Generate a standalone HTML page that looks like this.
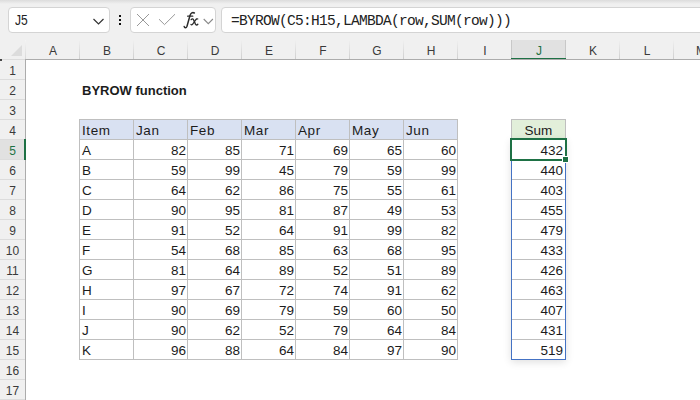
<!DOCTYPE html><html><head><meta charset="utf-8"><style>
*{margin:0;padding:0;box-sizing:border-box}
html,body{width:700px;height:400px;overflow:hidden;background:#fff}
body{position:relative;font-family:"Liberation Sans",sans-serif;color:#000}
.a{position:absolute}
#tb{left:0;top:0;width:700px;height:40px;background:#f0f0f0}
#tbtop{left:0;top:0;width:700px;height:4px;background:linear-gradient(#dcdcdc,#f0f0f0)}
.box{position:absolute;top:7px;height:26px;background:#fff;border:1px solid #d4d4d4;border-radius:4px}
#hdr{left:0;top:40px;width:700px;height:20px;background:#f0f0f0}
#rhdr{left:0;top:60px;width:26px;height:340px;background:#f0f0f0}
.ch{position:absolute;top:40px;height:19px;width:54px;text-align:center;font-size:12px;line-height:23px;color:#3a3a3a}
.chl{position:absolute;top:40px;width:1px;height:19px;background:linear-gradient(#f0f0f0,#cfcfcf)}
.rh{position:absolute;left:0;width:25px;height:20px;text-align:center;font-size:12px;line-height:23px;color:#3a3a3a}
.rhl{position:absolute;left:0;width:25px;height:1px;background:#dcdcdc}
.c{position:absolute;height:20px;font-size:13.5px;line-height:22px;white-space:nowrap;color:#1c1c1c}
.t{letter-spacing:0.6px}
.n{text-align:right}
</style></head><body><div class="a" id="tb"></div><div class="a" id="tbtop"></div>
<div class="box" style="left:8px;width:102px"></div>
<div class="a" style="left:15px;top:7px;height:26px;line-height:26px;font-size:14px;color:#222;transform:scaleX(0.86);transform-origin:0 0">J5</div>
<svg class="a" style="left:92px;top:17px" width="13" height="9" viewBox="0 0 13 9"><path d="M1.5 2 L6.5 7 L11.5 2" fill="none" stroke="#333" stroke-width="1.2"/></svg>
<div class="a" style="left:119px;top:15px;width:2px;height:2px;background:#111"></div>
<div class="a" style="left:119px;top:19px;width:2px;height:2px;background:#111"></div>
<div class="a" style="left:119px;top:23px;width:2px;height:2px;background:#111"></div>
<div class="box" style="left:130px;width:86px"></div>
<svg class="a" style="left:136px;top:13px" width="14" height="14" viewBox="0 0 14 14"><path d="M1 1 L13 13 M13 1 L1 13" fill="none" stroke="#999" stroke-width="1"/></svg>
<svg class="a" style="left:158px;top:13px" width="18" height="14" viewBox="0 0 18 14"><path d="M1 6.2 L6.5 11.6 L17 1.2" fill="none" stroke="#999" stroke-width="1"/></svg>
<svg class="a" style="left:180px;top:8px" width="24" height="24" viewBox="0 0 24 24"><g fill="none" stroke="#2b2b2b" stroke-linecap="round"><path d="M4.2,18.6 C4.6,20.2 6.2,20.3 7,18.2 L10,7.5 C10.8,4.8 12.6,4.1 14.4,5" stroke-width="1.5"/><path d="M7.6,8.2 L12.8,8.2" stroke-width="1.2"/><path d="M11.2,11.6 C12,10.6 13.2,10.6 13.7,12 L15.4,16 C16,17.3 17,17.2 17.8,16.2" stroke-width="1.4"/><path d="M17.8,11 C17,10.4 16.4,10.9 15.5,12.2 L12.9,15.9 C12.1,17.1 11.4,17.1 10.9,16.4" stroke-width="1.2"/></g></svg>
<svg class="a" style="left:202px;top:17px" width="12" height="8" viewBox="0 0 12 8"><path d="M1.7 2 L6.3 6.6 L10.9 2" fill="none" stroke="#8a8a8a" stroke-width="1.1"/></svg>
<div class="box" style="left:221px;width:520px"></div>
<div class="a" style="left:231px;top:8px;height:26px;line-height:26px;font-family:'Liberation Mono',monospace;font-size:14.5px;letter-spacing:-0.7px;color:#222">=BYROW(C5:H15,LAMBDA(row,SUM(row)))</div>
<div class="a" id="hdr"></div><div class="a" id="rhdr"></div>
<svg class="a" style="left:10px;top:44px" width="13" height="13" viewBox="0 0 13 13"><path d="M12 1 L12 12 L1 12 Z" fill="#dcdcdc"/></svg>
<div class="a" style="left:511px;top:40px;width:55px;height:19px;background:#e1e1e1;border-left:1px solid #c8c8c8;border-right:1px solid #c8c8c8"></div>
<div class="ch" style="left:26px;color:#3a3a3a">A</div>
<div class="chl" style="left:79px"></div>
<div class="ch" style="left:80px;color:#3a3a3a">B</div>
<div class="chl" style="left:133px"></div>
<div class="ch" style="left:134px;color:#3a3a3a">C</div>
<div class="chl" style="left:187px"></div>
<div class="ch" style="left:188px;color:#3a3a3a">D</div>
<div class="chl" style="left:241px"></div>
<div class="ch" style="left:242px;color:#3a3a3a">E</div>
<div class="chl" style="left:295px"></div>
<div class="ch" style="left:296px;color:#3a3a3a">F</div>
<div class="chl" style="left:349px"></div>
<div class="ch" style="left:350px;color:#3a3a3a">G</div>
<div class="chl" style="left:403px"></div>
<div class="ch" style="left:404px;color:#3a3a3a">H</div>
<div class="chl" style="left:457px"></div>
<div class="ch" style="left:458px;color:#3a3a3a">I</div>
<div class="ch" style="left:512px;color:#1e7145">J</div>
<div class="ch" style="left:566px;color:#3a3a3a">K</div>
<div class="chl" style="left:619px"></div>
<div class="ch" style="left:620px;color:#3a3a3a">L</div>
<div class="chl" style="left:673px"></div>
<div class="ch" style="left:674px;color:#3a3a3a">M</div>
<div class="chl" style="left:727px"></div>
<div class="a" style="left:511px;top:58px;width:55px;height:2px;background:#1e7145"></div>
<div class="a" style="left:0;top:59px;width:25px;height:1px;background:#dcdcdc"></div><div class="a" style="left:25px;top:59px;width:675px;height:1px;background:#acacac"></div><div class="a" style="left:0;top:58.5px;width:2px;height:2px;background:#111;border-radius:1px"></div>
<div class="a" style="left:0;top:139px;width:25px;height:21px;background:#e1e1e1"></div>
<div class="rh" style="top:60px;color:#3a3a3a">1</div>
<div class="rhl" style="top:79px"></div>
<div class="rh" style="top:80px;color:#3a3a3a">2</div>
<div class="rhl" style="top:99px"></div>
<div class="rh" style="top:100px;color:#3a3a3a">3</div>
<div class="rhl" style="top:119px"></div>
<div class="rh" style="top:120px;color:#3a3a3a">4</div>
<div class="rhl" style="top:139px"></div>
<div class="rh" style="top:140px;color:#1e7145">5</div>
<div class="rhl" style="top:159px"></div>
<div class="rh" style="top:160px;color:#3a3a3a">6</div>
<div class="rhl" style="top:179px"></div>
<div class="rh" style="top:180px;color:#3a3a3a">7</div>
<div class="rhl" style="top:199px"></div>
<div class="rh" style="top:200px;color:#3a3a3a">8</div>
<div class="rhl" style="top:219px"></div>
<div class="rh" style="top:220px;color:#3a3a3a">9</div>
<div class="rhl" style="top:239px"></div>
<div class="rh" style="top:240px;color:#3a3a3a">10</div>
<div class="rhl" style="top:259px"></div>
<div class="rh" style="top:260px;color:#3a3a3a">11</div>
<div class="rhl" style="top:279px"></div>
<div class="rh" style="top:280px;color:#3a3a3a">12</div>
<div class="rhl" style="top:299px"></div>
<div class="rh" style="top:300px;color:#3a3a3a">13</div>
<div class="rhl" style="top:319px"></div>
<div class="rh" style="top:320px;color:#3a3a3a">14</div>
<div class="rhl" style="top:339px"></div>
<div class="rh" style="top:340px;color:#3a3a3a">15</div>
<div class="rhl" style="top:359px"></div>
<div class="rh" style="top:360px;color:#3a3a3a">16</div>
<div class="rhl" style="top:379px"></div>
<div class="rh" style="top:380px;color:#3a3a3a">17</div>
<div class="rhl" style="top:399px"></div>
<div class="a" style="left:25px;top:40px;width:1px;height:19px;background:linear-gradient(#f4f4f4,#d8d8d8)"></div><div class="a" style="left:25px;top:59px;width:1px;height:341px;background:#acacac"></div>
<div class="a" style="left:24px;top:139px;width:2px;height:21px;background:#1e7145"></div>
<div class="c" style="left:82px;top:80px;font-weight:bold;font-size:13px">BYROW function</div>
<div class="a" style="left:80px;top:120px;width:377px;height:19px;background:#d9e1f2"></div>
<div class="a" style="left:79px;top:139px;width:379px;height:1px;background:#bfbfbf"></div>
<div class="a" style="left:79px;top:159px;width:379px;height:1px;background:#bfbfbf"></div>
<div class="a" style="left:79px;top:179px;width:379px;height:1px;background:#bfbfbf"></div>
<div class="a" style="left:79px;top:199px;width:379px;height:1px;background:#bfbfbf"></div>
<div class="a" style="left:79px;top:219px;width:379px;height:1px;background:#bfbfbf"></div>
<div class="a" style="left:79px;top:239px;width:379px;height:1px;background:#bfbfbf"></div>
<div class="a" style="left:79px;top:259px;width:379px;height:1px;background:#bfbfbf"></div>
<div class="a" style="left:79px;top:279px;width:379px;height:1px;background:#bfbfbf"></div>
<div class="a" style="left:79px;top:299px;width:379px;height:1px;background:#bfbfbf"></div>
<div class="a" style="left:79px;top:319px;width:379px;height:1px;background:#bfbfbf"></div>
<div class="a" style="left:79px;top:339px;width:379px;height:1px;background:#bfbfbf"></div>
<div class="a" style="left:79px;top:359px;width:379px;height:1px;background:#bfbfbf"></div>
<div class="a" style="left:79px;top:119px;width:379px;height:1px;background:#bfbfbf"></div>
<div class="a" style="left:79px;top:119px;width:1px;height:241px;background:#bfbfbf"></div>
<div class="a" style="left:133px;top:119px;width:1px;height:241px;background:#bfbfbf"></div>
<div class="a" style="left:187px;top:119px;width:1px;height:241px;background:#bfbfbf"></div>
<div class="a" style="left:241px;top:119px;width:1px;height:241px;background:#bfbfbf"></div>
<div class="a" style="left:295px;top:119px;width:1px;height:241px;background:#bfbfbf"></div>
<div class="a" style="left:349px;top:119px;width:1px;height:241px;background:#bfbfbf"></div>
<div class="a" style="left:403px;top:119px;width:1px;height:241px;background:#bfbfbf"></div>
<div class="a" style="left:457px;top:119px;width:1px;height:241px;background:#bfbfbf"></div>
<div class="c t" style="left:82px;top:120px">Item</div>
<div class="c t" style="left:136px;top:120px">Jan</div>
<div class="c t" style="left:190px;top:120px">Feb</div>
<div class="c t" style="left:244px;top:120px">Mar</div>
<div class="c t" style="left:298px;top:120px">Apr</div>
<div class="c t" style="left:352px;top:120px">May</div>
<div class="c t" style="left:406px;top:120px">Jun</div>
<div class="c t" style="left:82px;top:140px">A</div>
<div class="c n" style="left:134px;width:52px;top:140px">82</div>
<div class="c n" style="left:188px;width:52px;top:140px">85</div>
<div class="c n" style="left:242px;width:52px;top:140px">71</div>
<div class="c n" style="left:296px;width:52px;top:140px">69</div>
<div class="c n" style="left:350px;width:52px;top:140px">65</div>
<div class="c n" style="left:404px;width:52px;top:140px">60</div>
<div class="c t" style="left:82px;top:160px">B</div>
<div class="c n" style="left:134px;width:52px;top:160px">59</div>
<div class="c n" style="left:188px;width:52px;top:160px">99</div>
<div class="c n" style="left:242px;width:52px;top:160px">45</div>
<div class="c n" style="left:296px;width:52px;top:160px">79</div>
<div class="c n" style="left:350px;width:52px;top:160px">59</div>
<div class="c n" style="left:404px;width:52px;top:160px">99</div>
<div class="c t" style="left:82px;top:180px">C</div>
<div class="c n" style="left:134px;width:52px;top:180px">64</div>
<div class="c n" style="left:188px;width:52px;top:180px">62</div>
<div class="c n" style="left:242px;width:52px;top:180px">86</div>
<div class="c n" style="left:296px;width:52px;top:180px">75</div>
<div class="c n" style="left:350px;width:52px;top:180px">55</div>
<div class="c n" style="left:404px;width:52px;top:180px">61</div>
<div class="c t" style="left:82px;top:200px">D</div>
<div class="c n" style="left:134px;width:52px;top:200px">90</div>
<div class="c n" style="left:188px;width:52px;top:200px">95</div>
<div class="c n" style="left:242px;width:52px;top:200px">81</div>
<div class="c n" style="left:296px;width:52px;top:200px">87</div>
<div class="c n" style="left:350px;width:52px;top:200px">49</div>
<div class="c n" style="left:404px;width:52px;top:200px">53</div>
<div class="c t" style="left:82px;top:220px">E</div>
<div class="c n" style="left:134px;width:52px;top:220px">91</div>
<div class="c n" style="left:188px;width:52px;top:220px">52</div>
<div class="c n" style="left:242px;width:52px;top:220px">64</div>
<div class="c n" style="left:296px;width:52px;top:220px">91</div>
<div class="c n" style="left:350px;width:52px;top:220px">99</div>
<div class="c n" style="left:404px;width:52px;top:220px">82</div>
<div class="c t" style="left:82px;top:240px">F</div>
<div class="c n" style="left:134px;width:52px;top:240px">54</div>
<div class="c n" style="left:188px;width:52px;top:240px">68</div>
<div class="c n" style="left:242px;width:52px;top:240px">85</div>
<div class="c n" style="left:296px;width:52px;top:240px">63</div>
<div class="c n" style="left:350px;width:52px;top:240px">68</div>
<div class="c n" style="left:404px;width:52px;top:240px">95</div>
<div class="c t" style="left:82px;top:260px">G</div>
<div class="c n" style="left:134px;width:52px;top:260px">81</div>
<div class="c n" style="left:188px;width:52px;top:260px">64</div>
<div class="c n" style="left:242px;width:52px;top:260px">89</div>
<div class="c n" style="left:296px;width:52px;top:260px">52</div>
<div class="c n" style="left:350px;width:52px;top:260px">51</div>
<div class="c n" style="left:404px;width:52px;top:260px">89</div>
<div class="c t" style="left:82px;top:280px">H</div>
<div class="c n" style="left:134px;width:52px;top:280px">97</div>
<div class="c n" style="left:188px;width:52px;top:280px">67</div>
<div class="c n" style="left:242px;width:52px;top:280px">72</div>
<div class="c n" style="left:296px;width:52px;top:280px">74</div>
<div class="c n" style="left:350px;width:52px;top:280px">91</div>
<div class="c n" style="left:404px;width:52px;top:280px">62</div>
<div class="c t" style="left:82px;top:300px">I</div>
<div class="c n" style="left:134px;width:52px;top:300px">90</div>
<div class="c n" style="left:188px;width:52px;top:300px">69</div>
<div class="c n" style="left:242px;width:52px;top:300px">79</div>
<div class="c n" style="left:296px;width:52px;top:300px">59</div>
<div class="c n" style="left:350px;width:52px;top:300px">60</div>
<div class="c n" style="left:404px;width:52px;top:300px">50</div>
<div class="c t" style="left:82px;top:320px">J</div>
<div class="c n" style="left:134px;width:52px;top:320px">90</div>
<div class="c n" style="left:188px;width:52px;top:320px">62</div>
<div class="c n" style="left:242px;width:52px;top:320px">52</div>
<div class="c n" style="left:296px;width:52px;top:320px">79</div>
<div class="c n" style="left:350px;width:52px;top:320px">64</div>
<div class="c n" style="left:404px;width:52px;top:320px">84</div>
<div class="c t" style="left:82px;top:340px">K</div>
<div class="c n" style="left:134px;width:52px;top:340px">96</div>
<div class="c n" style="left:188px;width:52px;top:340px">88</div>
<div class="c n" style="left:242px;width:52px;top:340px">64</div>
<div class="c n" style="left:296px;width:52px;top:340px">84</div>
<div class="c n" style="left:350px;width:52px;top:340px">97</div>
<div class="c n" style="left:404px;width:52px;top:340px">90</div>
<div class="a" style="left:511px;top:119px;width:55px;height:21px;background:#e2efda;border:1px solid #bfbfbf"></div>
<div class="c" style="left:512px;width:53px;top:120px;text-align:center">Sum</div>
<div class="a" style="left:511px;top:139px;width:55px;height:221px;border:1px solid #4472c4;box-shadow:0 2px 8px rgba(0,0,0,0.13)"></div>
<div class="a" style="left:512px;top:159px;width:53px;height:1px;background:#bfbfbf"></div>
<div class="a" style="left:512px;top:179px;width:53px;height:1px;background:#bfbfbf"></div>
<div class="a" style="left:512px;top:199px;width:53px;height:1px;background:#bfbfbf"></div>
<div class="a" style="left:512px;top:219px;width:53px;height:1px;background:#bfbfbf"></div>
<div class="a" style="left:512px;top:239px;width:53px;height:1px;background:#bfbfbf"></div>
<div class="a" style="left:512px;top:259px;width:53px;height:1px;background:#bfbfbf"></div>
<div class="a" style="left:512px;top:279px;width:53px;height:1px;background:#bfbfbf"></div>
<div class="a" style="left:512px;top:299px;width:53px;height:1px;background:#bfbfbf"></div>
<div class="a" style="left:512px;top:319px;width:53px;height:1px;background:#bfbfbf"></div>
<div class="a" style="left:512px;top:339px;width:53px;height:1px;background:#bfbfbf"></div>
<div class="c n" style="left:512px;width:51px;top:140px">432</div>
<div class="c n" style="left:512px;width:51px;top:160px">440</div>
<div class="c n" style="left:512px;width:51px;top:180px">403</div>
<div class="c n" style="left:512px;width:51px;top:200px">455</div>
<div class="c n" style="left:512px;width:51px;top:220px">479</div>
<div class="c n" style="left:512px;width:51px;top:240px">433</div>
<div class="c n" style="left:512px;width:51px;top:260px">426</div>
<div class="c n" style="left:512px;width:51px;top:280px">463</div>
<div class="c n" style="left:512px;width:51px;top:300px">407</div>
<div class="c n" style="left:512px;width:51px;top:320px">431</div>
<div class="c n" style="left:512px;width:51px;top:340px">519</div>
<div class="a" style="left:510px;top:138px;width:57px;height:23px;border:2px solid #1e7145"></div>
<div class="a" style="left:562px;top:156px;width:7px;height:7px;background:#1e7145;border:1px solid #fff"></div></body></html>
